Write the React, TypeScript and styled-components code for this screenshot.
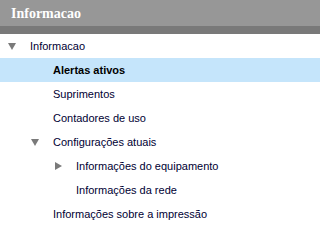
import React from "react";
import styled, { createGlobalStyle } from "styled-components";

const Global = createGlobalStyle`
  html, body { margin: 0; padding: 0; background: #ffffff; }
  body { font-family: "Liberation Sans", Arial, sans-serif; }
`;

const Panel = styled.div`
  width: 100%;
  display: flex;
  flex-direction: column;
`;

const Header = styled.div`
  height: 26px;
  background: #979797;
  color: #ffffff;
  font-family: "Liberation Serif", "Times New Roman", serif;
  font-weight: bold;
  font-size: 14px;
  line-height: 28px;
  padding-left: 11px;
  box-sizing: border-box;
`;

const Strip = styled.div`
  height: 8px;
  background: #797979;
`;

const Row = styled.div<{ $level: number; $active?: boolean }>`
  height: 24px;
  display: flex;
  align-items: center;
  padding-left: ${(p) => 8 + p.$level * 23}px;
  background: ${(p) => (p.$active ? "#c5e5fb" : "transparent")};
  font-size: 11px;
  color: ${(p) => (p.$active ? "#000000" : "#000033")};
  font-weight: ${(p) => (p.$active ? "bold" : "normal")};
  white-space: nowrap;
`;

const Toggle = styled.span`
  width: 22px;
  flex: 0 0 22px;
  display: flex;
  align-items: center;
`;

const Label = styled.span``;

type Item = { label: string; level: number; toggle?: "down" | "right"; active?: boolean };

const items: Item[] = [
  { label: "Informacao", level: 0, toggle: "down" },
  { label: "Alertas ativos", level: 1, active: true },
  { label: "Suprimentos", level: 1 },
  { label: "Contadores de uso", level: 1 },
  { label: "Configurações atuais", level: 1, toggle: "down" },
  { label: "Informações do equipamento", level: 2, toggle: "right" },
  { label: "Informações da rede", level: 2 },
  { label: "Informações sobre a impressão", level: 1 },
];

const Arrow = ({ dir }: { dir: "down" | "right" }) =>
  dir === "down" ? (
    <svg width="8" height="7" viewBox="0 0 8 7">
      <polygon points="0,0 8,0 4,7" fill="#7a7a7a" />
    </svg>
  ) : (
    <svg width="8" height="8" viewBox="0 0 8 8" style={{ marginLeft: 1 }}>
      <polygon points="0,0 7,4 0,8" fill="#7a7a7a" />
    </svg>
  );

export default function App() {
  return (
    <>
      <Global />
      <Panel>
        <Header>Informacao</Header>
        <Strip />
        {items.map((it) => (
          <Row key={it.label} $level={it.level} $active={it.active}>
            <Toggle>{it.toggle && <Arrow dir={it.toggle} />}</Toggle>
            <Label>{it.label}</Label>
          </Row>
        ))}
      </Panel>
    </>
  );
}
